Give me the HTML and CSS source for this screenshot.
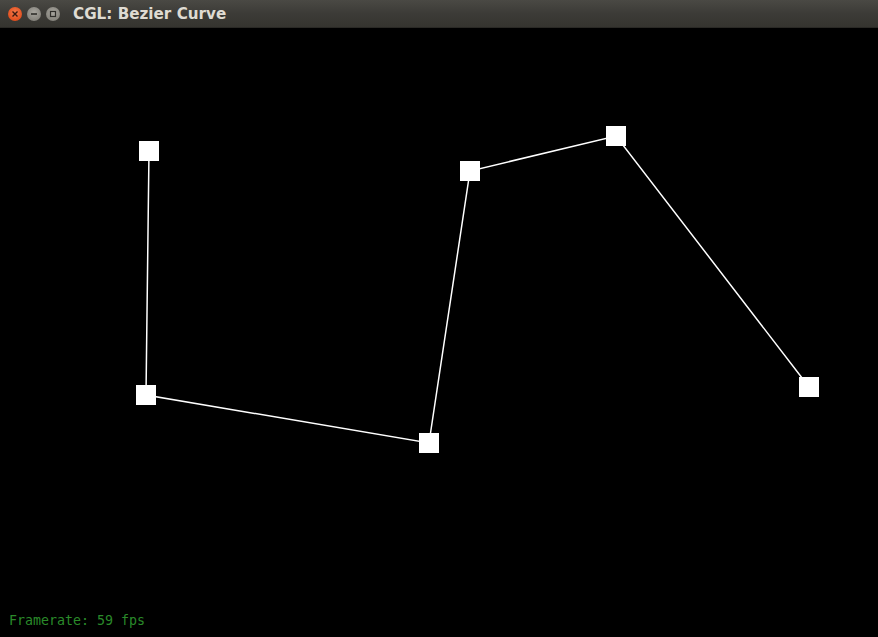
FILE: index.html
```html
<!DOCTYPE html>
<html>
<head>
<meta charset="utf-8">
<link rel="stylesheet" href="styles.css">
</head>
<body>
<div class="window">
  <div class="titlebar">
    <div class="buttons">
      <span class="btn close"><svg width="14" height="14" viewBox="0 0 14 14"><path d="M4.5 4.5 L9.5 9.5 M9.5 4.5 L4.5 9.5" stroke="#3a1a10" stroke-width="1.4"/></svg></span>
      <span class="btn min"><svg width="14" height="14" viewBox="0 0 14 14"><path d="M4 7 H10" stroke="#2e2d2a" stroke-width="1.6"/></svg></span>
      <span class="btn max"><svg width="14" height="14" viewBox="0 0 14 14"><rect x="4.5" y="4.5" width="5" height="5" fill="none" stroke="#2e2d2a" stroke-width="1.2"/></svg></span>
    </div>
    <div class="title">CGL: Bezier Curve</div>
  </div>
  <div class="canvas">
    <svg class="scene" viewBox="0 28 878 609" width="878" height="609">
      <polyline points="149,151 146,395 429,443 470,171 616,136 809,387" fill="none" stroke="#fff" stroke-width="1.5"/>
      <g fill="#fff">
        <rect x="139" y="141" width="20" height="20"/>
        <rect x="136" y="385" width="20" height="20"/>
        <rect x="419" y="433" width="20" height="20"/>
        <rect x="460" y="161" width="20" height="20"/>
        <rect x="606" y="126" width="20" height="20"/>
        <rect x="799" y="377" width="20" height="20"/>
      </g>
    </svg>
    <div class="fps">Framerate: 59 fps</div>
  </div>
</div>
</body>
</html>
```
FILE: styles.css
```css
html, body {
  margin: 0;
  padding: 0;
  background: #000;
}
.window {
  width: 878px;
  height: 637px;
  display: flex;
  flex-direction: column;
  overflow: hidden;
}
.titlebar {
  height: 28px;
  flex: 0 0 28px;
  display: flex;
  align-items: center;
  background: linear-gradient(#4a4944, #3c3b37 50%, #35342f);
  box-sizing: border-box;
  border-bottom: 1px solid #2a2925;
}
.buttons {
  display: flex;
  gap: 5px;
  padding-left: 8px;
}
.btn {
  width: 14px;
  height: 14px;
  border-radius: 50%;
  display: flex;
}
.close {
  background: radial-gradient(circle at 50% 40%, #f47a4b, #e2501f 70%, #b8380f);
}
.min, .max {
  background: radial-gradient(circle at 50% 40%, #a8a69f, #86847d 70%, #6e6c66);
}
.title {
  margin-left: 13px;
  padding-top: 1px;
  font-family: "DejaVu Sans", sans-serif;
  font-weight: bold;
  font-size: 15.2px;
  color: #dfdbd2;
}
.canvas {
  position: relative;
  flex: 1;
  background: #000;
}
.scene {
  display: block;
}
.fps {
  position: absolute;
  left: 9px;
  bottom: 9px;
  font-family: "DejaVu Sans Mono", monospace;
  font-size: 13.3px;
  color: #2a8a2a;
}
```
